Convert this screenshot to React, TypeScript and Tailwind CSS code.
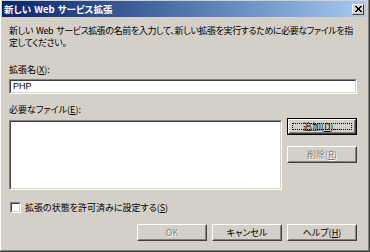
import React from 'react'

const font = "[font-family:'Noto_Sans_CJK_JP',sans-serif] [font-feature-settings:'palt']"

// Win2000 style raised button
const Button = ({ label, accel, suffix = '', disabled = false, isDefault = false }: {
  label: string
  accel: string
  suffix?: string
  disabled?: boolean
  isDefault?: boolean
}) => {
  const text = (
    <span className={disabled ? 'text-[#808080] [text-shadow:1px_1px_0_#fff]' : 'text-black'}>
      {label}
      {accel && (
        <>
          (<span className="underline underline-offset-1">{accel}</span>)
        </>
      )}
      {suffix}
    </span>
  )
  const face = (
    <div className="flex-1 border border-t-white border-l-white border-r-[#404040] border-b-[#404040]">
      <div className="h-full border border-t-[#d4d0c8] border-l-[#d4d0c8] border-r-[#808080] border-b-[#808080] flex items-center justify-center p-[2px]">
        {isDefault ? (
          <div className="w-full h-full border border-dotted border-black flex items-center justify-center">{text}</div>
        ) : text}
      </div>
    </div>
  )
  return (
    <div className={`w-[70px] h-[17px] flex text-[9px] leading-[11px] ${isDefault ? 'border border-black' : ''}`}>
      {face}
    </div>
  )
}

const Sunken = ({ className, children }: { className: string, children?: React.ReactNode }) => (
  <div className={`border border-t-[#808080] border-l-[#808080] border-r-white border-b-white ${className}`}>
    <div className="h-full border border-t-[#404040] border-l-[#404040] border-r-[#d4d0c8] border-b-[#d4d0c8] bg-white">
      {children}
    </div>
  </div>
)

const App = () => {
  return (
    <div className={`w-[370px] h-[252px] bg-[#d4d0c8] text-black ${font}`}>
      <div className="w-full h-full border-b border-r border-b-[#404040] border-r-[#404040]">
        <div className="w-full h-full border-b border-r border-l border-b-[#808080] border-r-[#808080] border-l-white pl-px pr-[2px] pb-px flex flex-col">
          {/* title bar */}
          <div className="mt-px h-[16px] flex items-center justify-between bg-gradient-to-r from-[#0a246a] to-[#a6caf0] pl-[2px] pr-[2px]">
            <span className="text-white font-bold text-[9.5px] leading-[16px] whitespace-nowrap">
              新しい<span className="mx-[3px]">Web</span>サービス拡張
            </span>
            <div className="w-[12px] h-[11px] border border-t-white border-l-white border-r-[#404040] border-b-[#404040] bg-[#d4d0c8] flex items-center justify-center">
              <svg width="7" height="6" viewBox="0 0 7 6">
                <path d="M0 0h2v1h1v1h1V1h1V0h2v1H6v1H5v2h1v1h1v1H5V5H4V4H3v1H2v1H0V5h1V4h1V2H1V1H0z" fill="#000" />
              </svg>
            </div>
          </div>

          <div className="pl-[7px] flex flex-col text-[9px]">
            <div className="mt-[8px] leading-[12px] whitespace-nowrap tracking-[-0.4px]">
              <div>新しい<span className="mx-[3px]">Web</span>サービス拡張の名前を入力して、新しい拡張を実行するために必要なファイルを指</div>
              <div>定してください。</div>
            </div>

            <div className="mt-[15px] leading-[11px]">
              拡張名(<span className="underline underline-offset-1">X</span>):
            </div>
            <Sunken className="mt-[4px] w-[348px] h-[15px]">
              <div className="pl-[2px] leading-[11px] text-[9px] [font-family:'Liberation_Sans',sans-serif]">PHP</div>
            </Sunken>

            <div className="mt-[10px] leading-[11px]">
              必要なファイル(<span className="underline underline-offset-1">E</span>):
            </div>

            <div className="mt-[3px] flex gap-[5px]">
              <Sunken className="mt-[2px] w-[273px] h-[70px]" />
              <div className="flex flex-col gap-[11px]">
                <Button label="追加" accel="D" suffix="..." isDefault />
                <Button label="削除" accel="R" disabled />
              </div>
            </div>

            <div className="mt-[12px] flex items-center gap-[4px] leading-[11px] pl-px">
              <Sunken className="w-[11px] h-[11px]" />
              <span>
                拡張の状態を許可済みに設定する(<span className="underline underline-offset-1">S</span>)
              </span>
            </div>

            <div className="mt-[11px] flex justify-end gap-[5px] w-[348px]">
              <Button label="OK" accel="" disabled />
              <Button label="キャンセル" accel="" />
              <Button label="ヘルプ" accel="H" />
            </div>
          </div>
        </div>
      </div>
    </div>
  )
}

export default App
